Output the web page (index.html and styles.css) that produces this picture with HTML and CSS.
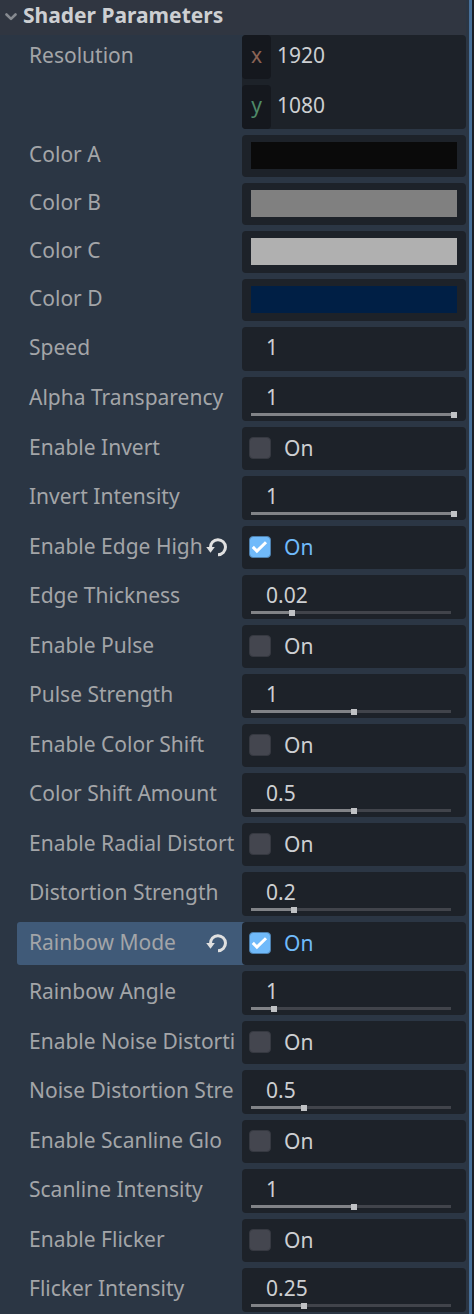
FILE: index.html
```
<!DOCTYPE html>
<html lang="en">
<head>
<meta charset="utf-8">
<title>Shader Parameters</title>
<link rel="stylesheet" href="styles.css">
</head>
<body>
<svg class="defs" width="0" height="0" aria-hidden="true">
  <symbol id="revert" viewBox="0 0 22 22">
    <path d="M4.5 11.5A7.5 7.5 0 1 1 12 18.7" fill="none" stroke="currentColor" stroke-width="3"/>
    <path d="M.2 11.1H8.8L4.5 16.7Z" fill="currentColor"/>
  </symbol>
  <symbol id="tick" viewBox="0 0 22 22">
    <path d="M3.8 10.9L7.9 15.1L17 6.2" fill="none" stroke="currentColor" stroke-width="3"/>
  </symbol>
</svg>
<main class="inspector">
  <header class="section">
    <svg class="chevron" viewBox="0 0 12 8"><path d="M1.5 1.5L6 5.9L10.5 1.5" fill="none" stroke="currentColor" stroke-width="2.6" stroke-linecap="round" stroke-linejoin="round"/></svg>
    <h1 class="title">Shader Parameters</h1>
  </header>
  <div class="rows" id="rows"></div>
</main>
<script src="app.js"></script>
</body>
</html>
```
FILE: styles.css
```
body {
  margin: 0;
  background: #1b1e25;
  font: 21px/30px "Noto Sans", "Open Sans", sans-serif;
  color: #cdcfd2;
}
.defs { display: block; }
.inspector {
  box-sizing: border-box;
  width: 472px;
  height: 1314px;
  padding-right: 3px;
  overflow: hidden;
  background: #2b3644;
  border-right: 3px solid #47709a;
}
.section {
  display: flex;
  align-items: flex-start;
  height: 35px;
  background: #303641;
}
.chevron { width: 12px; height: 8px; margin: 13px 6px 0 5px; color: #868a90; }
.title { margin: 0; font-size: 21px; line-height: 30px; font-weight: 700; white-space: nowrap; }
.rows { display: grid; gap: 6px; }
.row { display: grid; grid-template-columns: 225px 224px; padding-left: 17px; }
.name {
  display: flex;
  justify-content: space-between;
  padding: 5px 14px 0 12px;
  color: #a3a5a8;
  white-space: nowrap;
}
.color .name { padding-top: 4px; }
.selected .name { background: #405a78; border-radius: 3px 0 0 3px; margin-right: -3px; padding-right: 17px; }
.revert { flex: none; width: 22px; height: 22px; margin-top: 5px; color: #e0e0e0; }
.field { position: relative; box-sizing: border-box; background: #1d2229; border-radius: 4px; }
.vector .field { display: grid; gap: 6px; }
.axis { display: flex; height: 44px; line-height: 30px; }
.axis-name { box-sizing: border-box; width: 29px; padding-top: 5px; text-align: center; background: #15181e; border-radius: 4px; }
.axis-value { padding: 5px 0 0 6px; }
.x .axis-name { color: #8a6355; }
.y .axis-name { color: #4f8a68; }
.color .field { height: 42px; padding: 7px 9px 8px; }
.swatch { height: 27px; }
.number .field { display: grid; grid-template-rows: 30px 6px; height: 44px; padding: 5px 9px 0; }
.value { padding-left: 15px; }
.slider { display: flex; align-items: center; width: 206px; height: 6px; }
.fill { height: 3px; margin-bottom: 1px; background: #818387; }
.handle { flex: none; width: 6px; height: 6px; background: #bfc1c4; }
.rest { flex: 1; height: 3px; margin: 0 6px 1px 0; background: #41444b; }
.full .rest { display: none; }
.check .field { display: flex; height: 43px; padding: 6px 7px 0; }
.box { box-sizing: border-box; width: 22px; height: 22px; margin: 4px 13px 0 0; border: 1px solid #363941; border-radius: 4px; background: #44464f; }
.on .box { background: #70bafa; border-color: #4d80ae; color: #fff; }
.on .state { color: #70bafa; }
.tick { display: block; width: 22px; height: 22px; margin: -1px; }
```
FILE: app.js
```
const rows = [
  ["vector", "Resolution", [["x", "1920"], ["y", "1080"]]],
  ["color", "Color A", "#0a0a0a"],
  ["color", "Color B", "#808080"],
  ["color", "Color C", "#b0b0b0"],
  ["color", "Color D", "#001f45"],
  ["number", "Speed", "1"],
  ["number", "Alpha Transparency", "1", 200],
  ["check", "Enable Invert", false],
  ["number", "Invert Intensity", "1", 200],
  ["check", "Enable Edge High", true],
  ["number", "Edge Thickness", "0.02", 38],
  ["check", "Enable Pulse", false],
  ["number", "Pulse Strength", "1", 100],
  ["check", "Enable Color Shift", false],
  ["number", "Color Shift Amount", "0.5", 100],
  ["check", "Enable Radial Distort", false],
  ["number", "Distortion Strength", "0.2", 40],
  ["check", "Rainbow Mode", true, "selected"],
  ["number", "Rainbow Angle", "1", 20],
  ["check", "Enable Noise Distorti", false],
  ["number", "Noise Distortion Stre", "0.5", 50],
  ["check", "Enable Scanline Glo", false],
  ["number", "Scanline Intensity", "1", 100],
  ["check", "Enable Flicker", false],
  ["number", "Flicker Intensity", "0.25", 50]
];

const fields = {
  vector: v => v.map(([axis, n]) =>
    `<div class="axis ${axis}"><span class="axis-name">${axis}</span><span class="axis-value">${n}</span></div>`).join(""),
  color: v => `<div class="swatch" style="background:${v}"></div>`,
  number: (v, pos) => `<span class="value">${v}</span>` + (pos === undefined ? "" :
    `<div class="slider${pos === 200 ? " full" : ""}"><div class="fill" style="width:${pos}px"></div><div class="handle"></div><div class="rest"></div></div>`),
  check: v => `<span class="box">${v ? '<svg class="tick"><use href="#tick"/></svg>' : ""}</span><span class="state">On</span>`
};

document.getElementById("rows").innerHTML = rows.map(([type, name, value, extra]) => {
  const on = type === "check" && value;
  const revert = on ? '<svg class="revert"><use href="#revert"/></svg>' : "";
  const state = (on ? " on" : "") + (extra === "selected" ? " selected" : "");
  return `<div class="row ${type}${state}"><div class="name"><span>${name}</span>${revert}</div><div class="field">${fields[type](value, extra)}</div></div>`;
}).join("");
```
